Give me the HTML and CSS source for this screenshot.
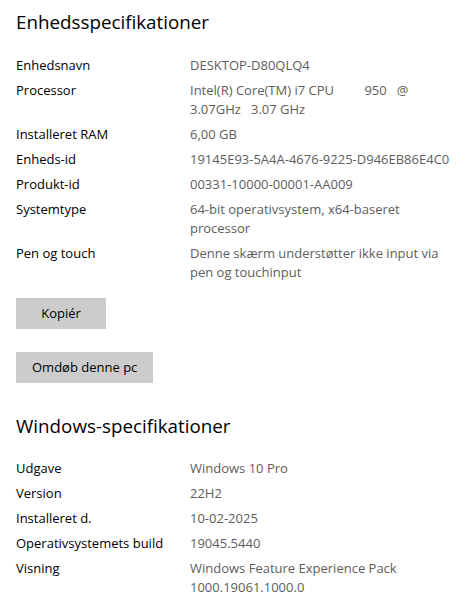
FILE: index.html
```html
<!DOCTYPE html>
<html lang="da">
<head>
<meta charset="utf-8">
<title>Om</title>
<link rel="stylesheet" href="styles.css">
</head>
<body>
<main class="page">
  <section class="section">
    <h2 class="title">Enhedsspecifikationer</h2>
    <dl class="specs">
      <div class="row"><dt>Enhedsnavn</dt><dd>DESKTOP-D80QLQ4</dd></div>
      <div class="row"><dt>Processor</dt><dd class="pre">Intel(R) Core(TM) i7 CPU         950   @<br>3.07GHz   3.07 GHz</dd></div>
      <div class="row"><dt>Installeret RAM</dt><dd>6,00 GB</dd></div>
      <div class="row"><dt>Enheds-id</dt><dd>19145E93-5A4A-4676-9225-D946EB86E4C0</dd></div>
      <div class="row"><dt>Produkt-id</dt><dd>00331-10000-00001-AA009</dd></div>
      <div class="row"><dt>Systemtype</dt><dd>64-bit operativsystem, x64-baseret<br>processor</dd></div>
      <div class="row"><dt>Pen og touch</dt><dd>Denne skærm understøtter ikke input via<br>pen og touchinput</dd></div>
    </dl>
    <div class="actions">
      <button class="btn btn-copy" type="button">Kopiér</button>
      <button class="btn" type="button">Omdøb denne pc</button>
    </div>
  </section>
  <section class="section section-win">
    <h2 class="title">Windows-specifikationer</h2>
    <dl class="specs specs-win">
      <div class="row"><dt>Udgave</dt><dd>Windows 10 Pro</dd></div>
      <div class="row"><dt>Version</dt><dd>22H2</dd></div>
      <div class="row"><dt>Installeret d.</dt><dd>10-02-2025</dd></div>
      <div class="row"><dt>Operativsystemets build</dt><dd>19045.5440</dd></div>
      <div class="row"><dt>Visning</dt><dd>Windows Feature Experience Pack<br>1000.19061.1000.0</dd></div>
    </dl>
  </section>
</main>
</body>
</html>
```
FILE: styles.css
```css
html, body {
  margin: 0;
  padding: 0;
  background: #ffffff;
}
body {
  font-family: "Open Sans", "Noto Sans", sans-serif;
  color: #000000;
  overflow: hidden;
}
.page {
  padding: 8px 0 0 16px;
}
.title {
  margin: 0;
  font-size: 18.8px;
  font-weight: 400;
  line-height: 28px;
  color: #000000;
}
.specs {
  margin: 20px 0 0;
  display: flex;
  flex-direction: column;
  gap: 6px;
}
.specs-win {
  margin-top: 19px;
}
.row {
  display: grid;
  grid-template-columns: 174px auto;
  font-size: 13px;
  line-height: 19px;
}
.row dt {
  color: #000000;
  white-space: nowrap;
}
.row dd {
  margin: 0;
  color: #5d5d5d;
  white-space: nowrap;
}
.row dd.pre {
  white-space: pre;
}
.actions {
  display: flex;
  flex-direction: column;
  align-items: flex-start;
  gap: 23px;
  margin-top: 16px;
}
.btn {
  font-family: inherit;
  font-size: 13px;
  line-height: 19px;
  color: #000000;
  background: #cccccc;
  border: none;
  border-radius: 0;
  height: 31px;
  padding: 0 16px;
}
.btn-copy {
  width: 90px;
}
.section-win {
  margin-top: 29px;
}
```
